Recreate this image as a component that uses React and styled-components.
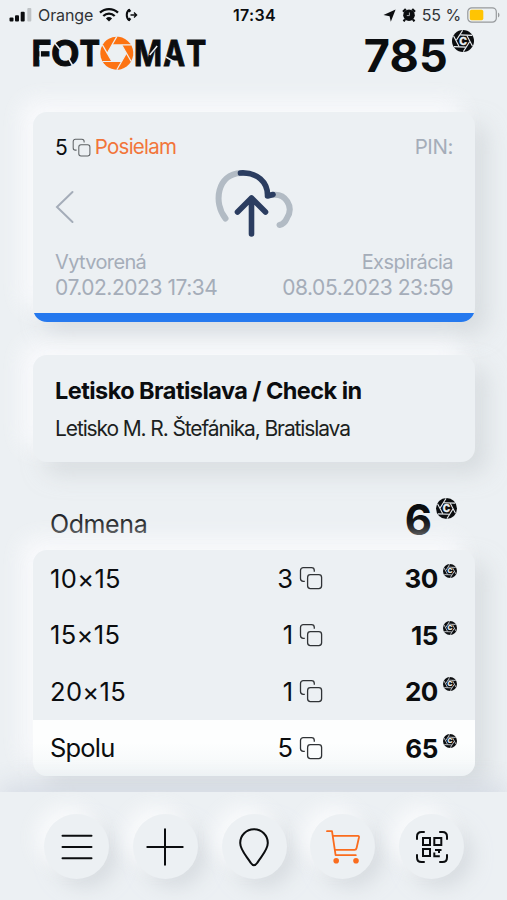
import React from "react";
import styled, { createGlobalStyle } from "styled-components";

const ink = "#0b0d0f";
const muted = "#a5adb9";
const surface = "#ecf0f3";
const orange = "#fa6c1e";

const GlobalStyle = createGlobalStyle`
  *, *::before, *::after { box-sizing: border-box; }
  html, body { margin: 0; padding: 0; }
  body { background: ${surface}; overflow: hidden; }
  svg { display: block; flex: none; overflow: visible; }
`;

const Screen = styled.div`
  width: 507px;
  height: 900px;
  display: flex;
  flex-direction: column;
  overflow: hidden;
  background: ${surface};
  color: ${ink};
  font-family: Inter, "Liberation Sans", sans-serif;
  line-height: 1;
  white-space: nowrap;
`;

const Label = styled.span`
  font-size: ${(p) => p.$size}px;
  font-weight: ${(p) => p.$weight || 400};
  letter-spacing: ${(p) => p.$track || 0}px;
  color: ${(p) => p.$color || "inherit"};
`;

const StatusBar = styled.div`
  height: 30px;
  display: grid;
  grid-template-columns: 1fr auto 1fr;
  align-items: center;
  padding: 0 7px 0 9px;
`;

const StatusGroup = styled.div`
  display: flex;
  align-items: center;
  justify-content: ${(p) => (p.$end ? "flex-end" : "flex-start")};
  gap: ${(p) => p.$gap}px;
`;

const Header = styled.header`
  height: 82px;
  display: flex;
  justify-content: space-between;
  align-items: flex-start;
  padding: 0 33px 0 30px;
`;

const Price = styled.div`
  display: flex;
  align-items: flex-start;
  gap: ${(p) => p.$gap}px;
`;

const Balance = styled(Price)`
  > span { margin-top: 3px; }
`;

const Card = styled.section`
  position: relative;
  width: 442px;
  margin-left: 33px;
  flex: none;
  border-radius: 14px;
  background: ${surface};
  box-shadow: -12px -12px 22px rgba(251, 252, 254, 0.85),
    12px 12px 22px rgba(199, 204, 208, 0.55);
`;

const OrderCard = styled(Card)`
  height: 210px;
  display: flex;
  flex-direction: column;
  overflow: hidden;
  padding: 23px 0 0;
`;

const Between = styled.div`
  display: flex;
  justify-content: space-between;
  align-items: center;
  height: ${(p) => p.$h}px;
  padding: 0 22px;
`;

const Inline = styled.div`
  display: flex;
  align-items: center;
  gap: 4px;
`;

const Progress = styled.div`
  height: 8.6px;
  margin-top: auto;
  background: #2478ee;
`;

const CloudRow = styled.div`
  height: 91px;
  display: grid;
  grid-template-columns: 1fr 80px 1fr;
  align-items: start;
  padding: 6px 22px 0;
  > svg:first-child { margin-top: 25px; }
  > svg:last-child { margin-left: -1px; }
`;

const PlaceCard = styled(Card)`
  height: 107px;
  margin-top: 33px;
  padding: 24px 22px;
  display: flex;
  flex-direction: column;
  gap: 15px;
`;

const Reward = styled.div`
  height: 88px;
  display: flex;
  justify-content: space-between;
  padding: 36px 50px 0;
  > span { margin-top: 14px; }
  > div > span { margin-top: 1px; }
`;

const PriceTable = styled(Card)`
  overflow: hidden;
`;

const PriceRow = styled.div`
  height: 56.5px;
  display: grid;
  grid-template-columns: 1fr 120px 134px;
  align-items: center;
  padding: 0 18px 0 17px;
  background: ${(p) => (p.$total ? "linear-gradient(#fdfefe 40%, #f3f7f8)" : "transparent")};
`;

const Count = styled.div`
  display: flex;
  align-items: center;
  justify-content: flex-end;
  gap: 6px;
`;

const Cost = styled(Price)`
  justify-content: flex-end;
  > span { margin-top: 2px; }
`;

const Nav = styled.nav`
  position: relative;
  height: 108px;
  margin-top: auto;
  padding: 22px 43px 0 44px;
  display: flex;
  justify-content: space-between;
  align-items: flex-start;
  background: ${surface};
  box-shadow: 0 -8px 22px rgba(205, 211, 223, 0.65);
`;

const NavButton = styled.button`
  width: 65px;
  height: 65px;
  display: flex;
  align-items: center;
  justify-content: center;
  padding: 0;
  border: 0;
  border-radius: 50%;
  background: ${surface};
  color: ${(p) => (p.$active ? orange : ink)};
  box-shadow: -9px -9px 18px rgba(250, 251, 252, 0.9),
    9px 9px 18px rgba(204, 209, 214, 0.6);
`;

const hexTurns = [0, 60, 120, 180, 240, 300];

const Logo = () => (
  <svg width="178" height="48" viewBox="30 30 178 48">
    <g fill={ink} stroke={ink} strokeWidth="1" fontFamily="Inter, sans-serif" fontWeight="700" fontSize="35.4">
      <text x="31.4" y="66.2" textLength="20" lengthAdjust="spacingAndGlyphs">F</text>
      <text x="51" y="66.2" textLength="28.5" lengthAdjust="spacingAndGlyphs">O</text>
      <text x="79.5" y="66.2" textLength="20.5" lengthAdjust="spacingAndGlyphs">T</text>
      <text x="134" y="66.2" textLength="28" lengthAdjust="spacingAndGlyphs">M</text>
      <text x="163.2" y="66.2" textLength="21.8" lengthAdjust="spacingAndGlyphs">A</text>
      <text x="186.2" y="66.2" textLength="20" lengthAdjust="spacingAndGlyphs">T</text>
    </g>
    <g stroke={surface} strokeWidth="1.5" fill="none">
      <path d="M40.2 48v12M53.5 41.5l6.5 8M68.5 58.5l5 8.5M157.2 46l-7.5 9M166 57l8.5 5" />
    </g>
    <g transform="rotate(30 116.8 53.2)">
      <circle cx="116.8" cy="53.2" r="16.5" fill="#fd7312" />
      <path d="M116.8 43.6l8.3 4.8v9.6l-8.3 4.8-8.3-4.8v-9.6z" fill={surface} />
      <g stroke={surface} strokeWidth="1.2">
        {hexTurns.map((a) => (
          <path key={a} d="M108.5 48.4l16.6-9.6" transform={`rotate(${a} 116.8 53.2)`} />
        ))}
      </g>
    </g>
  </svg>
);

const Coin = ({ size }) => (
  <svg width={size} height={size} viewBox="0 0 22 22">
    <circle cx="11" cy="11" r="11" fill={ink} />
    <g stroke={surface} strokeWidth="1.1" fill="none" transform="rotate(30 11 11)">
      {hexTurns.map((a) => (
        <path key={a} d="M5.6 7.1L16 1.6" transform={`rotate(${a} 11 11)`} />
      ))}
    </g>
    <text x="11" y="14.8" textAnchor="middle" fill={surface} stroke={surface} strokeWidth="0.3" fontFamily="Inter, sans-serif" fontSize="10.4" fontWeight="800">C</text>
  </svg>
);

const Copies = ({ size, color = "#303336" }) => (
  <svg width={size} height={size} viewBox="0 0 24 24" fill="none" stroke={color} strokeWidth="1.3">
    <rect x="8.6" y="8.6" width="14" height="14" rx="2.8" />
    <path d="M5.8 15.3H4.3A2.8 2.8 0 0 1 1.5 12.5V4.4a2.8 2.8 0 0 1 2.8-2.8h8.2a2.8 2.8 0 0 1 2.8 2.8V5.7" />
  </svg>
);

const Signal = () => (
  <svg width="23" height="14" viewBox="0 0 23 14" fill={ink}>
    <rect x="0.5" y="9.5" width="4" height="4" rx="1" />
    <rect x="6" y="7.2" width="4" height="6.3" rx="1" />
    <rect x="11.7" y="3.8" width="4" height="9.7" rx="1" />
    <rect x="18.3" y="0" width="4" height="13.5" rx="1" fill="#bfc3c6" />
  </svg>
);

const Wifi = () => (
  <svg width="20" height="14" viewBox="0 0 20 14" fill="none" stroke={ink} strokeWidth="2.3">
    <path d="M1 4.7a13 13 0 0 1 18 0M4.3 8a8.2 8.2 0 0 1 11.4 0" />
    <path d="M10 13.5L6.9 10.4a4.5 4.5 0 0 1 6.2 0z" fill={ink} stroke="none" />
  </svg>
);

const Forwarding = () => (
  <svg width="13" height="14" viewBox="0 0 13 14" fill="none" stroke={ink}>
    <path d="M4.6 1.7C.8 3.6.8 10.4 4.6 12.3" strokeWidth="2" />
    <path d="M3.5 1.5l1.7 2.3M3.5 12.5l1.7-2.3" strokeWidth="2.6" />
    <path d="M5.5 7h6M9 4.5L11.6 7 9 9.5" strokeWidth="1.3" />
  </svg>
);

const Locate = () => (
  <svg width="13" height="13" viewBox="0 0 13 13" fill={ink}>
    <path d="M12.6.4L7.8 12.7 6.6 7.2.5 6.1z" />
  </svg>
);

const Alarm = () => (
  <svg width="14" height="14" viewBox="0 0 14 14">
    <circle cx="7" cy="7.2" r="5.8" fill={ink} />
    <path d="M1 3.7L3.8 1M10.2 1L13 3.7M3 11.3l-1.4 2M11 11.3l1.4 2" stroke={ink} strokeWidth="2.2" />
    <path d="M7.4 4.5v3.1H4.8" stroke="#aaadb0" strokeWidth="1" fill="none" />
  </svg>
);

const Battery = () => (
  <svg width="33" height="16" viewBox="0 0 33 16">
    <rect x="0.8" y="0.8" width="28.5" height="14.4" rx="4" fill="none" stroke="#96999c" strokeWidth="1.2" />
    <rect x="2.8" y="2.8" width="13.5" height="10.4" rx="1.7" fill="#ffc403" />
    <path d="M31 5.5v5q1.5-.9 1.5-2.5T31 5.5" fill="#96999c" />
  </svg>
);

const Back = () => (
  <svg width="20" height="34" viewBox="0 0 20 34" fill="none" stroke={muted} strokeWidth="2" strokeLinecap="round">
    <path d="M17.5 2L2 17l15.5 15" />
  </svg>
);

const CloudUpload = () => (
  <svg width="80" height="74" viewBox="213 165 80 74" fill="none" strokeWidth="6" strokeLinecap="round" strokeLinejoin="round">
    <path d="M225.5 218.5C213 203 217 174 241 173M272 195C286 193 294 207 287 218Q284.5 224 279.5 225" stroke="#b2bbc4" />
    <path d="M240.5 173C257 172 268 182 267.5 196L273 194.5M251.5 234V198M237.5 212L251.5 198l14 14" stroke="#2b3d60" strokeWidth="5.6" />
  </svg>
);

const Menu = () => (
  <svg width="32" height="28" viewBox="0 0 32 28" stroke="currentColor" strokeWidth="2" strokeLinecap="round">
    <path d="M1.5 2.8h29M1.5 14h29M1.5 25.2h29" />
  </svg>
);

const Plus = () => (
  <svg width="38" height="38" viewBox="0 0 38 38" stroke="currentColor" strokeWidth="2" strokeLinecap="round">
    <path d="M1.3 19h35.4M19 1.3v35.4" />
  </svg>
);

const Pin = () => (
  <svg width="32" height="38" viewBox="0 0 32 38" fill="none" stroke="currentColor" strokeWidth="2" strokeLinejoin="round">
    <path d="M16 1.2A13.7 13.7 0 0 0 2.2 15C2.2 22 8.5 28 12.6 34.6Q14.5 37.2 16 37.2T19.4 34.6C23.5 28 29.8 22 29.8 15A13.7 13.7 0 0 0 16 1.2z" />
  </svg>
);

const Cart = () => (
  <svg width="36" height="36" viewBox="0 0 36 36" fill="none" stroke="currentColor" strokeWidth="1.8" strokeLinecap="round" strokeLinejoin="round">
    <path d="M2 2.2h5l3.6 24h20.2M8 6.8H33q1.2 0 1 1.4L31.6 19q-.4 1.8-2 1.8H10" />
    <circle cx="11.2" cy="31.7" r="2.8" fill="currentColor" stroke="none" />
    <circle cx="31" cy="31.7" r="2.8" fill="currentColor" stroke="none" />
  </svg>
);

const QrScan = () => (
  <svg width="34" height="34" viewBox="0 0 34 34" fill="none" stroke="currentColor" strokeWidth="2">
    <path d="M2 9V6.5Q2 2 6.5 2H9M25 2h2.5Q32 2 32 6.5V9M32 25v2.5Q32 32 27.5 32H25M9 32H6.5Q2 32 2 27.5V25" strokeLinecap="round" />
    <rect x="8" y="8" width="7" height="7" />
    <rect x="19.3" y="8" width="7" height="7" />
    <rect x="8" y="19" width="7" height="7" />
    <path d="M20 20h6.5M24 19v4M19.3 22.5v3.8h5.5" />
  </svg>
);

const rows = [
  { name: "10×15", count: 3, price: 30 },
  { name: "15×15", count: 1, price: 15 },
  { name: "20×15", count: 1, price: 20 },
  { name: "Spolu", count: 5, price: 65, total: true },
];

const navItems = [
  { id: "menu", Icon: Menu },
  { id: "add", Icon: Plus },
  { id: "places", Icon: Pin },
  { id: "cart", Icon: Cart, active: true },
  { id: "scan", Icon: QrScan },
];

export default function App() {
  return (
    <Screen>
      <GlobalStyle />
      <StatusBar>
        <StatusGroup $gap={6}>
          <Signal />
          <Label $size={16} $track={-0.1} $color="#303336">Orange</Label>
          <Wifi />
          <Forwarding />
        </StatusGroup>
        <Label $size={16} $weight={600} $track={0.3}>17:34</Label>
        <StatusGroup $end $gap={6}>
          <Locate />
          <Alarm />
          <Label $size={16} $track={-0.1} $color="#303336">55 %</Label>
          <Battery />
        </StatusGroup>
      </StatusBar>

      <Header>
        <Logo />
        <Balance $gap={4}>
          <Label $size={45} $weight={700} $track={0.2}>785</Label>
          <Coin size={22} />
        </Balance>
      </Header>

      <OrderCard>
        <Between $h={24}>
          <Inline>
            <Label $size={21}>5</Label>
            <Copies size={19} color="#5d6164" />
            <Label $size={20.5} $track={-0.75} $color="#f2753a">Posielam</Label>
          </Inline>
          <Label $size={20.5} $track={-0.4} $color={muted}>PIN:</Label>
        </Between>
        <CloudRow>
          <Back />
          <CloudUpload />
        </CloudRow>
        <Between $h={24}>
          <Label $size={20} $track={-0.65} $color={muted}>Vytvorená</Label>
          <Label $size={20} $track={-0.55} $color={muted}>Exspirácia</Label>
        </Between>
        <Between $h={27}>
          <Label $size={21} $track={-0.46} $color={muted}>07.02.2023 17:34</Label>
          <Label $size={21} $track={-0.46} $color={muted}>08.05.2023 23:59</Label>
        </Between>
        <Progress />
      </OrderCard>

      <PlaceCard>
        <Label $size={23.5} $weight={700} $track={-0.55}>Letisko Bratislava / Check in</Label>
        <Label $size={21} $track={-1.12} $color="#1c1f21">Letisko M. R. Štefánika, Bratislava</Label>
      </PlaceCard>

      <Reward>
        <Label $size={25} $track={-0.4} $color="#222528">Odmena</Label>
        <Price $gap={4}>
          <Label $size={42} $weight={700}>6</Label>
          <Coin size={21} />
        </Price>
      </Reward>

      <PriceTable>
        {rows.map((row) => (
          <PriceRow key={row.name} $total={row.total}>
            <Label $size={25.5} $track={row.total ? -0.8 : 0.35}>{row.name}</Label>
            <Count>
              <Label $size={25.5}>{row.count}</Label>
              <Copies size={24} />
            </Count>
            <Cost $gap={5}>
              <Label $size={26} $weight={700} $track={-0.4}>{row.price}</Label>
              <Coin size={14} />
            </Cost>
          </PriceRow>
        ))}
      </PriceTable>

      <Nav>
        {navItems.map(({ id, Icon, active }) => (
          <NavButton key={id} type="button" aria-label={id} $active={active}>
            <Icon />
          </NavButton>
        ))}
      </Nav>
    </Screen>
  );
}
